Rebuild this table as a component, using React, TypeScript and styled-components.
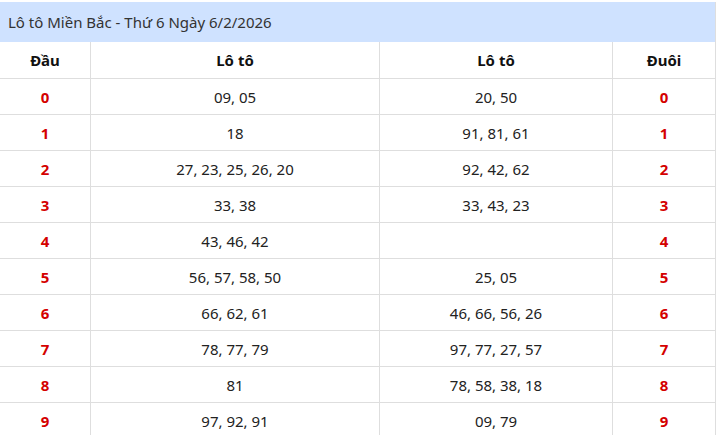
import { Fragment } from "react";
import styled, { createGlobalStyle } from "styled-components";

const GlobalStyle = createGlobalStyle`
  body {
    margin: 0;
    background: #fff;
    font-family: "Noto Sans", "Open Sans", sans-serif;
  }
`;

const Wrapper = styled.div`
  width: 716px;
  padding-top: 2px;
`;

const Title = styled.div`
  height: 40px;
  display: flex;
  align-items: center;
  padding-left: 8px;
  background: #cfe2ff;
  border-right: 1px solid #dedede;
  color: #333;
  font-size: 15px;
`;

const Grid = styled.div`
  display: grid;
  grid-template-columns: 91px 289px 233px 103px;
`;

const Cell = styled.div<{ $head?: boolean; $red?: boolean }>`
  box-sizing: border-box;
  height: ${(p) => (p.$head ? 37 : 36)}px;
  display: flex;
  align-items: center;
  justify-content: center;
  border-right: 1px solid #dedede;
  border-bottom: 1px solid #dedede;
  font-size: 15px;
  font-weight: ${(p) => (p.$head || p.$red ? 700 : 400)};
  color: ${(p) => (p.$red ? "#d40000" : p.$head ? "#111" : "#222")};
`;

const rows: [string, string][] = [
  ["09, 05", "20, 50"],
  ["18", "91, 81, 61"],
  ["27, 23, 25, 26, 20", "92, 42, 62"],
  ["33, 38", "33, 43, 23"],
  ["43, 46, 42", ""],
  ["56, 57, 58, 50", "25, 05"],
  ["66, 62, 61", "46, 66, 56, 26"],
  ["78, 77, 79", "97, 77, 27, 57"],
  ["81", "78, 58, 38, 18"],
  ["97, 92, 91", "09, 79"],
];

export default function App() {
  return (
    <Wrapper>
      <GlobalStyle />
      <Title>Lô tô Miền Bắc - Thứ 6 Ngày 6/2/2026</Title>
      <Grid>
        <Cell $head>Đầu</Cell>
        <Cell $head>Lô tô</Cell>
        <Cell $head>Lô tô</Cell>
        <Cell $head>Đuôi</Cell>
        {rows.map(([a, b], i) => (
          <Fragment key={i}>
            <Cell $red>{i}</Cell>
            <Cell>{a}</Cell>
            <Cell>{b}</Cell>
            <Cell $red>{i}</Cell>
          </Fragment>
        ))}
      </Grid>
    </Wrapper>
  );
}
